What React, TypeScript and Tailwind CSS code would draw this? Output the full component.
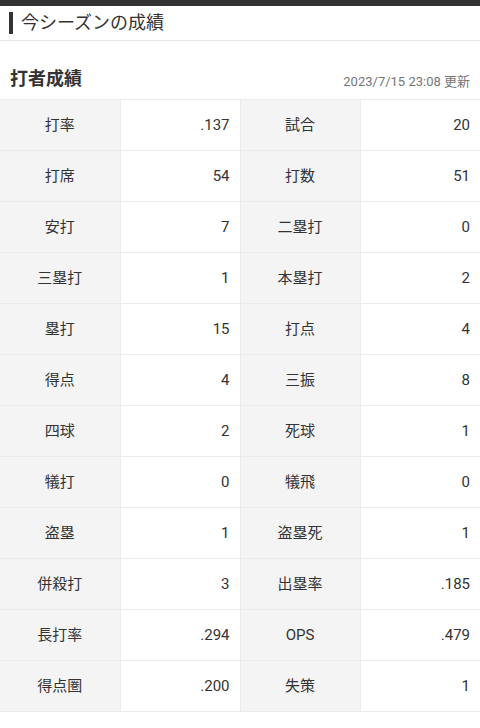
const rows: [string, string, string, string][] = [
  ["打率", ".137", "試合", "20"],
  ["打席", "54", "打数", "51"],
  ["安打", "7", "二塁打", "0"],
  ["三塁打", "1", "本塁打", "2"],
  ["塁打", "15", "打点", "4"],
  ["得点", "4", "三振", "8"],
  ["四球", "2", "死球", "1"],
  ["犠打", "0", "犠飛", "0"],
  ["盗塁", "1", "盗塁死", "1"],
  ["併殺打", "3", "出塁率", ".185"],
  ["長打率", ".294", "OPS", ".479"],
  ["得点圏", ".200", "失策", "1"],
];

export default function App() {
  return (
    <div
      className="w-[480px] min-h-[728px] bg-white text-[#333]"
      style={{ fontFamily: 'Roboto, "Noto Sans CJK JP", sans-serif' }}
    >
      <div className="h-[6px] bg-[#333]" />

      {/* Section title */}
      <div className="h-[35px] border-b border-[#e8e8e8] flex items-center pl-[9px]">
        <span className="w-[4px] h-[22px] bg-[#333] mr-[8px]" />
        <h2 className="text-[18px] leading-none">今シーズンの成績</h2>
      </div>

      <div className="h-[58px] flex items-end justify-between px-[10px] pb-[11px]">
        <h3 className="text-[18px] font-bold leading-none">打者成績</h3>
        <span className="text-[13px] text-[#777] leading-none">2023/7/15 23:08 更新</span>
      </div>

      <table className="w-full border-collapse table-fixed text-[15px]">
        <tbody>
          {rows.map((r) => (
            <tr key={r[0]} className="h-[51px]">
              <td className="w-[120px] border border-[#ebebeb] bg-[#f4f4f4] text-center border-l-0">{r[0]}</td>
              <td className="w-[120px] border border-[#ebebeb] text-right pr-[10px]">{r[1]}</td>
              <td className="w-[120px] border border-[#ebebeb] bg-[#f4f4f4] text-center">{r[2]}</td>
              <td className="w-[120px] border border-[#ebebeb] text-right pr-[10px] border-r-0">{r[3]}</td>
            </tr>
          ))}
        </tbody>
      </table>
    </div>
  );
}
